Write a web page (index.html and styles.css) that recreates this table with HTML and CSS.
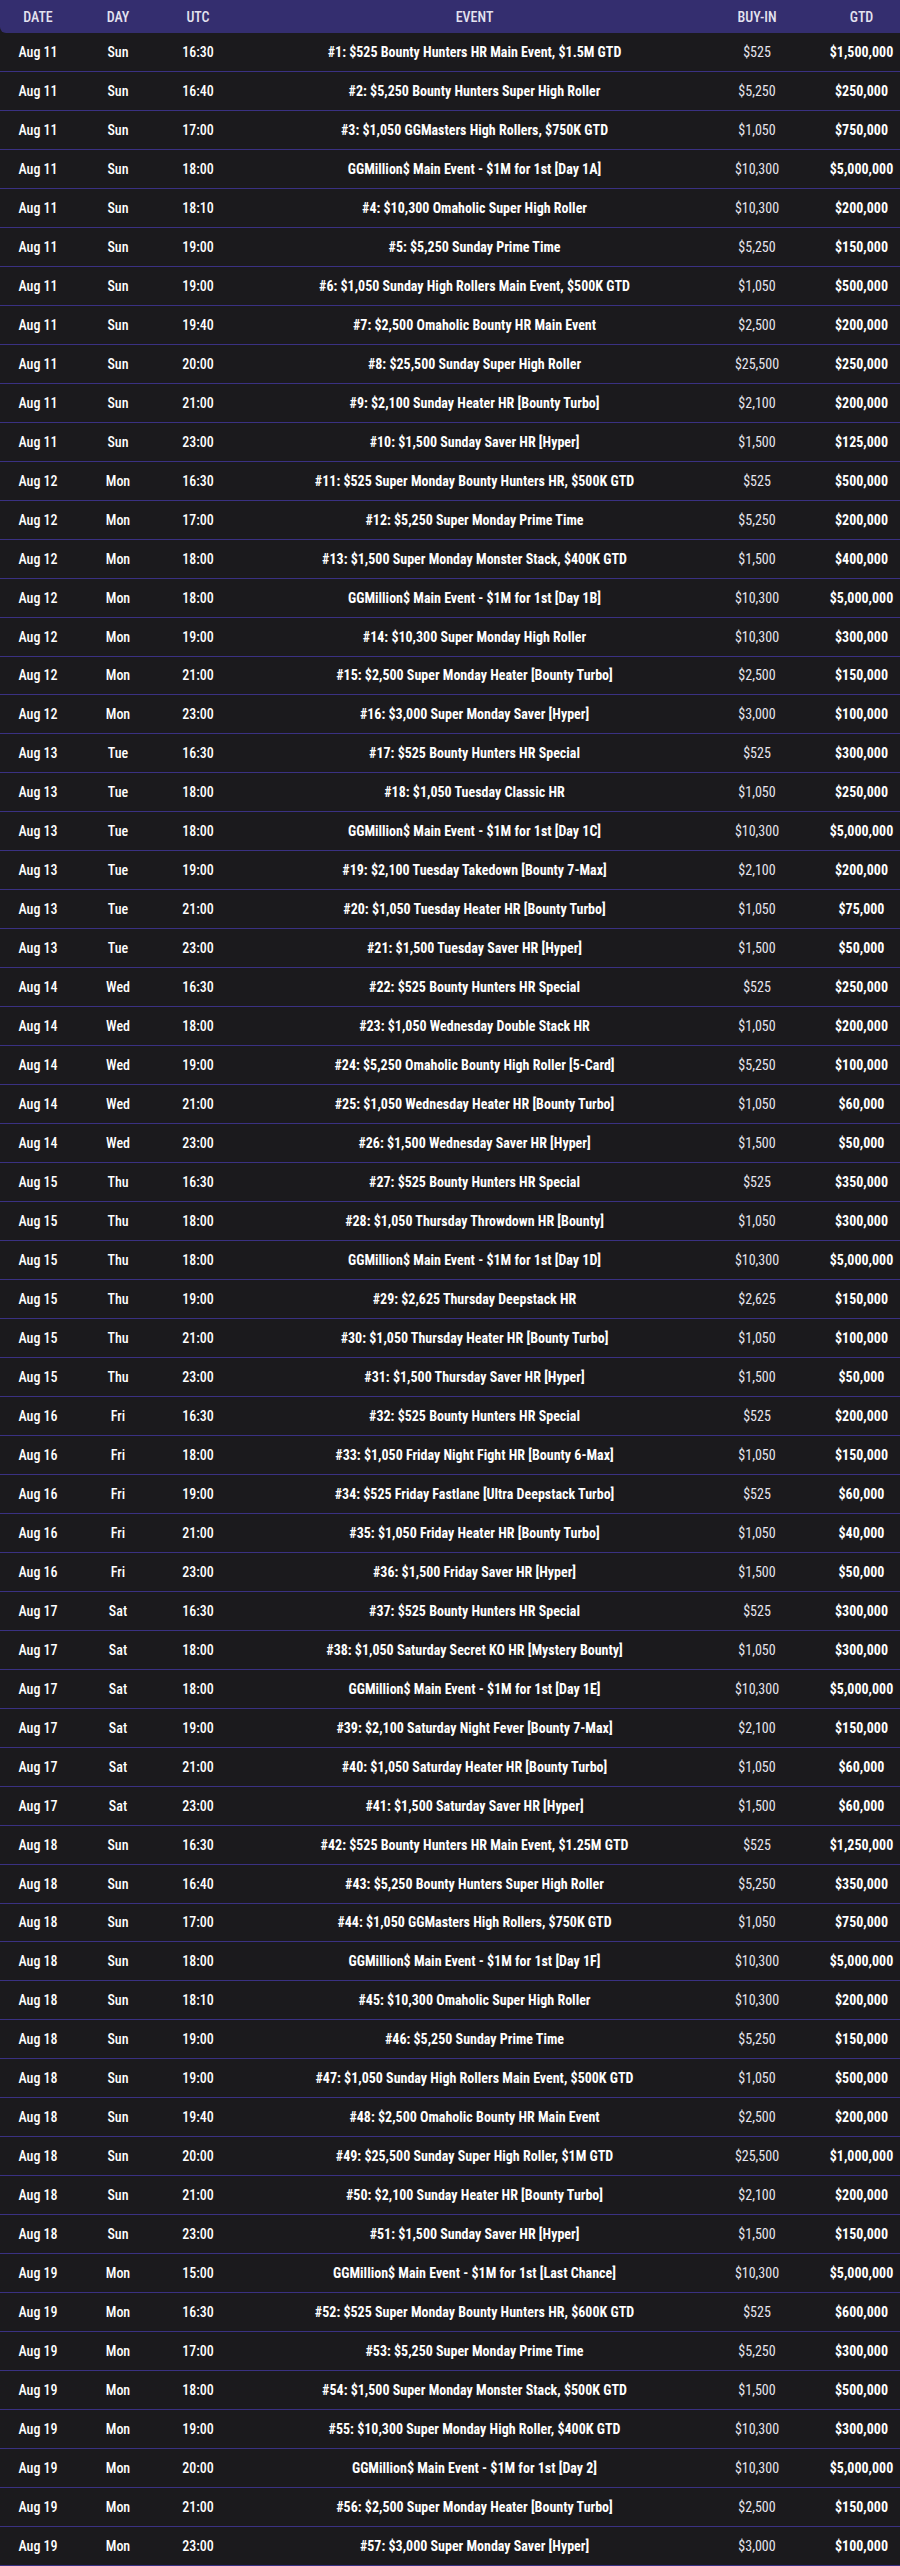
FILE: index.html
```html
<!DOCTYPE html>
<html lang="en">
<head>
<meta charset="utf-8">
<title>Schedule</title>
<link rel="stylesheet" href="styles.css">
</head>
<body>
<div class="wrap">
<table class="sched">
<colgroup>
<col class="c-date"><col class="c-day"><col class="c-utc"><col class="c-event"><col class="c-buy"><col class="c-gtd">
</colgroup>
<thead>
<tr><th class="first">DATE</th><th>DAY</th><th>UTC</th><th>EVENT</th><th>BUY-IN</th><th class="last">GTD</th></tr>
</thead>
<tbody>
<tr><td>Aug 11</td><td>Sun</td><td>16:30</td><td class="ev">#1: $525 Bounty Hunters HR Main Event, $1.5M GTD</td><td class="buy">$525</td><td class="gtd">$1,500,000</td></tr>
<tr><td>Aug 11</td><td>Sun</td><td>16:40</td><td class="ev">#2: $5,250 Bounty Hunters Super High Roller</td><td class="buy">$5,250</td><td class="gtd">$250,000</td></tr>
<tr><td>Aug 11</td><td>Sun</td><td>17:00</td><td class="ev">#3: $1,050 GGMasters High Rollers, $750K GTD</td><td class="buy">$1,050</td><td class="gtd">$750,000</td></tr>
<tr><td>Aug 11</td><td>Sun</td><td>18:00</td><td class="ev">GGMillion$ Main Event - $1M for 1st [Day 1A]</td><td class="buy">$10,300</td><td class="gtd">$5,000,000</td></tr>
<tr><td>Aug 11</td><td>Sun</td><td>18:10</td><td class="ev">#4: $10,300 Omaholic Super High Roller</td><td class="buy">$10,300</td><td class="gtd">$200,000</td></tr>
<tr><td>Aug 11</td><td>Sun</td><td>19:00</td><td class="ev">#5: $5,250 Sunday Prime Time</td><td class="buy">$5,250</td><td class="gtd">$150,000</td></tr>
<tr><td>Aug 11</td><td>Sun</td><td>19:00</td><td class="ev">#6: $1,050 Sunday High Rollers Main Event, $500K GTD</td><td class="buy">$1,050</td><td class="gtd">$500,000</td></tr>
<tr><td>Aug 11</td><td>Sun</td><td>19:40</td><td class="ev">#7: $2,500 Omaholic Bounty HR Main Event</td><td class="buy">$2,500</td><td class="gtd">$200,000</td></tr>
<tr><td>Aug 11</td><td>Sun</td><td>20:00</td><td class="ev">#8: $25,500 Sunday Super High Roller</td><td class="buy">$25,500</td><td class="gtd">$250,000</td></tr>
<tr><td>Aug 11</td><td>Sun</td><td>21:00</td><td class="ev">#9: $2,100 Sunday Heater HR [Bounty Turbo]</td><td class="buy">$2,100</td><td class="gtd">$200,000</td></tr>
<tr><td>Aug 11</td><td>Sun</td><td>23:00</td><td class="ev">#10: $1,500 Sunday Saver HR [Hyper]</td><td class="buy">$1,500</td><td class="gtd">$125,000</td></tr>
<tr><td>Aug 12</td><td>Mon</td><td>16:30</td><td class="ev">#11: $525 Super Monday Bounty Hunters HR, $500K GTD</td><td class="buy">$525</td><td class="gtd">$500,000</td></tr>
<tr><td>Aug 12</td><td>Mon</td><td>17:00</td><td class="ev">#12: $5,250 Super Monday Prime Time</td><td class="buy">$5,250</td><td class="gtd">$200,000</td></tr>
<tr><td>Aug 12</td><td>Mon</td><td>18:00</td><td class="ev">#13: $1,500 Super Monday Monster Stack, $400K GTD</td><td class="buy">$1,500</td><td class="gtd">$400,000</td></tr>
<tr><td>Aug 12</td><td>Mon</td><td>18:00</td><td class="ev">GGMillion$ Main Event - $1M for 1st [Day 1B]</td><td class="buy">$10,300</td><td class="gtd">$5,000,000</td></tr>
<tr><td>Aug 12</td><td>Mon</td><td>19:00</td><td class="ev">#14: $10,300 Super Monday High Roller</td><td class="buy">$10,300</td><td class="gtd">$300,000</td></tr>
<tr><td>Aug 12</td><td>Mon</td><td>21:00</td><td class="ev">#15: $2,500 Super Monday Heater [Bounty Turbo]</td><td class="buy">$2,500</td><td class="gtd">$150,000</td></tr>
<tr><td>Aug 12</td><td>Mon</td><td>23:00</td><td class="ev">#16: $3,000 Super Monday Saver [Hyper]</td><td class="buy">$3,000</td><td class="gtd">$100,000</td></tr>
<tr><td>Aug 13</td><td>Tue</td><td>16:30</td><td class="ev">#17: $525 Bounty Hunters HR Special</td><td class="buy">$525</td><td class="gtd">$300,000</td></tr>
<tr><td>Aug 13</td><td>Tue</td><td>18:00</td><td class="ev">#18: $1,050 Tuesday Classic HR</td><td class="buy">$1,050</td><td class="gtd">$250,000</td></tr>
<tr><td>Aug 13</td><td>Tue</td><td>18:00</td><td class="ev">GGMillion$ Main Event - $1M for 1st [Day 1C]</td><td class="buy">$10,300</td><td class="gtd">$5,000,000</td></tr>
<tr><td>Aug 13</td><td>Tue</td><td>19:00</td><td class="ev">#19: $2,100 Tuesday Takedown [Bounty 7-Max]</td><td class="buy">$2,100</td><td class="gtd">$200,000</td></tr>
<tr><td>Aug 13</td><td>Tue</td><td>21:00</td><td class="ev">#20: $1,050 Tuesday Heater HR [Bounty Turbo]</td><td class="buy">$1,050</td><td class="gtd">$75,000</td></tr>
<tr><td>Aug 13</td><td>Tue</td><td>23:00</td><td class="ev">#21: $1,500 Tuesday Saver HR [Hyper]</td><td class="buy">$1,500</td><td class="gtd">$50,000</td></tr>
<tr><td>Aug 14</td><td>Wed</td><td>16:30</td><td class="ev">#22: $525 Bounty Hunters HR Special</td><td class="buy">$525</td><td class="gtd">$250,000</td></tr>
<tr><td>Aug 14</td><td>Wed</td><td>18:00</td><td class="ev">#23: $1,050 Wednesday Double Stack HR</td><td class="buy">$1,050</td><td class="gtd">$200,000</td></tr>
<tr><td>Aug 14</td><td>Wed</td><td>19:00</td><td class="ev">#24: $5,250 Omaholic Bounty High Roller [5-Card]</td><td class="buy">$5,250</td><td class="gtd">$100,000</td></tr>
<tr><td>Aug 14</td><td>Wed</td><td>21:00</td><td class="ev">#25: $1,050 Wednesday Heater HR [Bounty Turbo]</td><td class="buy">$1,050</td><td class="gtd">$60,000</td></tr>
<tr><td>Aug 14</td><td>Wed</td><td>23:00</td><td class="ev">#26: $1,500 Wednesday Saver HR [Hyper]</td><td class="buy">$1,500</td><td class="gtd">$50,000</td></tr>
<tr><td>Aug 15</td><td>Thu</td><td>16:30</td><td class="ev">#27: $525 Bounty Hunters HR Special</td><td class="buy">$525</td><td class="gtd">$350,000</td></tr>
<tr><td>Aug 15</td><td>Thu</td><td>18:00</td><td class="ev">#28: $1,050 Thursday Throwdown HR [Bounty]</td><td class="buy">$1,050</td><td class="gtd">$300,000</td></tr>
<tr><td>Aug 15</td><td>Thu</td><td>18:00</td><td class="ev">GGMillion$ Main Event - $1M for 1st [Day 1D]</td><td class="buy">$10,300</td><td class="gtd">$5,000,000</td></tr>
<tr><td>Aug 15</td><td>Thu</td><td>19:00</td><td class="ev">#29: $2,625 Thursday Deepstack HR</td><td class="buy">$2,625</td><td class="gtd">$150,000</td></tr>
<tr><td>Aug 15</td><td>Thu</td><td>21:00</td><td class="ev">#30: $1,050 Thursday Heater HR [Bounty Turbo]</td><td class="buy">$1,050</td><td class="gtd">$100,000</td></tr>
<tr><td>Aug 15</td><td>Thu</td><td>23:00</td><td class="ev">#31: $1,500 Thursday Saver HR [Hyper]</td><td class="buy">$1,500</td><td class="gtd">$50,000</td></tr>
<tr><td>Aug 16</td><td>Fri</td><td>16:30</td><td class="ev">#32: $525 Bounty Hunters HR Special</td><td class="buy">$525</td><td class="gtd">$200,000</td></tr>
<tr><td>Aug 16</td><td>Fri</td><td>18:00</td><td class="ev">#33: $1,050 Friday Night Fight HR [Bounty 6-Max]</td><td class="buy">$1,050</td><td class="gtd">$150,000</td></tr>
<tr><td>Aug 16</td><td>Fri</td><td>19:00</td><td class="ev">#34: $525 Friday Fastlane [Ultra Deepstack Turbo]</td><td class="buy">$525</td><td class="gtd">$60,000</td></tr>
<tr><td>Aug 16</td><td>Fri</td><td>21:00</td><td class="ev">#35: $1,050 Friday Heater HR [Bounty Turbo]</td><td class="buy">$1,050</td><td class="gtd">$40,000</td></tr>
<tr><td>Aug 16</td><td>Fri</td><td>23:00</td><td class="ev">#36: $1,500 Friday Saver HR [Hyper]</td><td class="buy">$1,500</td><td class="gtd">$50,000</td></tr>
<tr><td>Aug 17</td><td>Sat</td><td>16:30</td><td class="ev">#37: $525 Bounty Hunters HR Special</td><td class="buy">$525</td><td class="gtd">$300,000</td></tr>
<tr><td>Aug 17</td><td>Sat</td><td>18:00</td><td class="ev">#38: $1,050 Saturday Secret KO HR [Mystery Bounty]</td><td class="buy">$1,050</td><td class="gtd">$300,000</td></tr>
<tr><td>Aug 17</td><td>Sat</td><td>18:00</td><td class="ev">GGMillion$ Main Event - $1M for 1st [Day 1E]</td><td class="buy">$10,300</td><td class="gtd">$5,000,000</td></tr>
<tr><td>Aug 17</td><td>Sat</td><td>19:00</td><td class="ev">#39: $2,100 Saturday Night Fever [Bounty 7-Max]</td><td class="buy">$2,100</td><td class="gtd">$150,000</td></tr>
<tr><td>Aug 17</td><td>Sat</td><td>21:00</td><td class="ev">#40: $1,050 Saturday Heater HR [Bounty Turbo]</td><td class="buy">$1,050</td><td class="gtd">$60,000</td></tr>
<tr><td>Aug 17</td><td>Sat</td><td>23:00</td><td class="ev">#41: $1,500 Saturday Saver HR [Hyper]</td><td class="buy">$1,500</td><td class="gtd">$60,000</td></tr>
<tr><td>Aug 18</td><td>Sun</td><td>16:30</td><td class="ev">#42: $525 Bounty Hunters HR Main Event, $1.25M GTD</td><td class="buy">$525</td><td class="gtd">$1,250,000</td></tr>
<tr><td>Aug 18</td><td>Sun</td><td>16:40</td><td class="ev">#43: $5,250 Bounty Hunters Super High Roller</td><td class="buy">$5,250</td><td class="gtd">$350,000</td></tr>
<tr><td>Aug 18</td><td>Sun</td><td>17:00</td><td class="ev">#44: $1,050 GGMasters High Rollers, $750K GTD</td><td class="buy">$1,050</td><td class="gtd">$750,000</td></tr>
<tr><td>Aug 18</td><td>Sun</td><td>18:00</td><td class="ev">GGMillion$ Main Event - $1M for 1st [Day 1F]</td><td class="buy">$10,300</td><td class="gtd">$5,000,000</td></tr>
<tr><td>Aug 18</td><td>Sun</td><td>18:10</td><td class="ev">#45: $10,300 Omaholic Super High Roller</td><td class="buy">$10,300</td><td class="gtd">$200,000</td></tr>
<tr><td>Aug 18</td><td>Sun</td><td>19:00</td><td class="ev">#46: $5,250 Sunday Prime Time</td><td class="buy">$5,250</td><td class="gtd">$150,000</td></tr>
<tr><td>Aug 18</td><td>Sun</td><td>19:00</td><td class="ev">#47: $1,050 Sunday High Rollers Main Event, $500K GTD</td><td class="buy">$1,050</td><td class="gtd">$500,000</td></tr>
<tr><td>Aug 18</td><td>Sun</td><td>19:40</td><td class="ev">#48: $2,500 Omaholic Bounty HR Main Event</td><td class="buy">$2,500</td><td class="gtd">$200,000</td></tr>
<tr><td>Aug 18</td><td>Sun</td><td>20:00</td><td class="ev">#49: $25,500 Sunday Super High Roller, $1M GTD</td><td class="buy">$25,500</td><td class="gtd">$1,000,000</td></tr>
<tr><td>Aug 18</td><td>Sun</td><td>21:00</td><td class="ev">#50: $2,100 Sunday Heater HR [Bounty Turbo]</td><td class="buy">$2,100</td><td class="gtd">$200,000</td></tr>
<tr><td>Aug 18</td><td>Sun</td><td>23:00</td><td class="ev">#51: $1,500 Sunday Saver HR [Hyper]</td><td class="buy">$1,500</td><td class="gtd">$150,000</td></tr>
<tr><td>Aug 19</td><td>Mon</td><td>15:00</td><td class="ev">GGMillion$ Main Event - $1M for 1st [Last Chance]</td><td class="buy">$10,300</td><td class="gtd">$5,000,000</td></tr>
<tr><td>Aug 19</td><td>Mon</td><td>16:30</td><td class="ev">#52: $525 Super Monday Bounty Hunters HR, $600K GTD</td><td class="buy">$525</td><td class="gtd">$600,000</td></tr>
<tr><td>Aug 19</td><td>Mon</td><td>17:00</td><td class="ev">#53: $5,250 Super Monday Prime Time</td><td class="buy">$5,250</td><td class="gtd">$300,000</td></tr>
<tr><td>Aug 19</td><td>Mon</td><td>18:00</td><td class="ev">#54: $1,500 Super Monday Monster Stack, $500K GTD</td><td class="buy">$1,500</td><td class="gtd">$500,000</td></tr>
<tr><td>Aug 19</td><td>Mon</td><td>19:00</td><td class="ev">#55: $10,300 Super Monday High Roller, $400K GTD</td><td class="buy">$10,300</td><td class="gtd">$300,000</td></tr>
<tr><td>Aug 19</td><td>Mon</td><td>20:00</td><td class="ev">GGMillion$ Main Event - $1M for 1st [Day 2]</td><td class="buy">$10,300</td><td class="gtd">$5,000,000</td></tr>
<tr><td>Aug 19</td><td>Mon</td><td>21:00</td><td class="ev">#56: $2,500 Super Monday Heater [Bounty Turbo]</td><td class="buy">$2,500</td><td class="gtd">$150,000</td></tr>
<tr><td>Aug 19</td><td>Mon</td><td>23:00</td><td class="ev">#57: $3,000 Super Monday Saver [Hyper]</td><td class="buy">$3,000</td><td class="gtd">$100,000</td></tr>
</tbody>
</table>
</div>
</body>
</html>
```
FILE: styles.css
```css
html, body {
  margin: 0;
  padding: 0;
  background: #1b1a1d;
  overflow: hidden;
}
.wrap {
  width: 900px;
  height: 2566px;
  overflow: hidden;
}
.sched {
  width: 922px;
  table-layout: fixed;
  border-collapse: separate;
  border-spacing: 0;
  font-family: "Roboto Condensed", "Liberation Sans Narrow", "Arial Narrow", Roboto, sans-serif;
  font-size: 14px;
  color: #ffffff;
}
.c-date { width: 76px; }
.c-day { width: 84px; }
.c-utc { width: 76px; }
.c-event { width: 477px; }
.c-buy { width: 88px; }
.c-gtd { width: 121px; }
.sched th {
  height: 33px;
  padding: 0;
  background: #342e6f;
  color: #e4e3f0;
  font-weight: 500;
  font-size: 14px;
  text-align: center;
  vertical-align: middle;
}
.sched th.first { border-bottom-left-radius: 6px; }
.sched th.last { border-bottom-right-radius: 6px; }
.sched td {
  height: 37.98px;
  padding: 0;
  text-align: center;
  vertical-align: middle;
  border-bottom: 1px solid #3a3182;
  font-weight: 500;
  white-space: nowrap;
}
.sched td.ev { font-weight: 700; }
.sched td.buy { font-weight: 400; color: #e6e5ee; }
.sched td.gtd { font-weight: 700; }
```
